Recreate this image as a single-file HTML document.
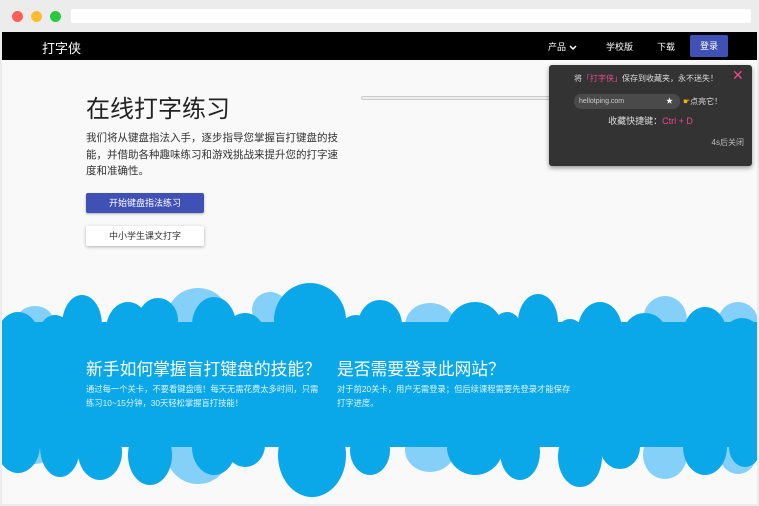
<!DOCTYPE html>
<html><head><meta charset="utf-8"><style>
*{margin:0;padding:0;box-sizing:border-box}
body{width:759px;height:506px;background:#ececec;font-family:"Liberation Sans","Noto Sans CJK SC",sans-serif;position:relative;overflow:hidden}
.dot{position:absolute;top:11px;width:11px;height:11px;border-radius:50%}
.url{position:absolute;left:71px;top:9px;width:680px;height:14px;background:#fff;border-radius:2px}
.page{position:absolute;left:2px;top:32px;width:755px;height:472px;background:#f9f9f9;overflow:hidden}
.nav{position:absolute;left:0;top:0;width:755px;height:28px;background:#000;color:#fff}
.abs{position:absolute}
.btn1{position:absolute;left:84px;top:161px;width:118px;height:20px;background:#3f51b5;color:#fff;font-size:9px;text-align:center;line-height:20px;border-radius:2px;box-shadow:0 1px 2px rgba(0,0,0,.3)}
.btn2{position:absolute;left:84px;top:194px;width:118px;height:20px;background:#fff;color:#333;font-size:9px;text-align:center;line-height:20px;border-radius:2px;box-shadow:0 1px 3px rgba(0,0,0,.3)}
.pop{position:absolute;left:549px;top:65px;width:203px;height:101px;background:#333;border-radius:3px;box-shadow:0 2px 5px rgba(0,0,0,.4);color:#ddd}
</style></head><body>
<div class="dot" style="left:12px;background:#fe5f57"></div>
<div class="dot" style="left:31px;background:#febc2e"></div>
<div class="dot" style="left:50px;background:#28c840"></div>
<div class="url"></div>
<div class="page">
<div class="nav">
<div class="abs" style="left:40px;top:6px;font-size:13px">打字侠</div>
<div class="abs" style="left:546px;top:8px;font-size:9px">产品 <svg width="8" height="6" viewBox="0 0 8 6" style="vertical-align:middle"><path d="M1 1l3 3 3-3" stroke="#fff" stroke-width="1.5" fill="none"/></svg></div>
<div class="abs" style="left:604px;top:8px;font-size:9px">学校版</div>
<div class="abs" style="left:655px;top:8px;font-size:9px">下载</div>
<div class="abs" style="left:688px;top:3px;width:38px;height:22px;background:#3f51b5;border-radius:2px;font-size:9px;text-align:center;line-height:22px">登录</div>
</div>
<div class="abs" style="left:84px;top:57px;font-size:24px;color:#222">在线打字练习</div>
<div class="abs" style="left:84px;top:98px;width:262px;font-size:10.5px;line-height:16.5px;color:#333">我们将从键盘指法入手，逐步指导您掌握盲打键盘的技能，并借助各种趣味练习和游戏挑战来提升您的打字速度和准确性。</div>
<div class="btn1">开始键盘指法练习</div>
<div class="btn2">中小学生课文打字</div>
<div class="abs" style="left:359px;top:64px;width:200px;height:4px;border:1px solid #ccc;border-radius:2px;background:#eee"></div>
<svg class="abs" style="left:-2px;top:213px" width="759" height="259" viewBox="0 245 759 259">
<g fill="#85d0f8">
<ellipse cx="198" cy="320" rx="32" ry="32"/><ellipse cx="430" cy="325" rx="25" ry="22"/><ellipse cx="665" cy="320" rx="22" ry="24"/><ellipse cx="738" cy="322" rx="20" ry="20"/><ellipse cx="35" cy="320" rx="18" ry="14"/><ellipse cx="270" cy="310" rx="18" ry="18"/>
<ellipse cx="198" cy="452" rx="32" ry="32"/><ellipse cx="430" cy="450" rx="25" ry="22"/><ellipse cx="665" cy="455" rx="22" ry="24"/><ellipse cx="738" cy="450" rx="20" ry="24"/><ellipse cx="35" cy="450" rx="18" ry="14"/>
</g>
<g fill="#0aa8e8">
<rect x="2" y="322" width="755" height="125"/>
<ellipse cx="18" cy="340" rx="22" ry="28"/><ellipse cx="55" cy="340" rx="18" ry="25"/><ellipse cx="82" cy="325" rx="20" ry="30"/><ellipse cx="128" cy="330" rx="22" ry="28"/><ellipse cx="158" cy="320" rx="20" ry="22"/><ellipse cx="214" cy="325" rx="22" ry="28"/><ellipse cx="245" cy="335" rx="20" ry="22"/>
<ellipse cx="310" cy="320" rx="36" ry="37"/><ellipse cx="356" cy="335" rx="18" ry="20"/><ellipse cx="380" cy="325" rx="22" ry="25"/><ellipse cx="410" cy="340" rx="15" ry="15"/><ellipse cx="475" cy="330" rx="28" ry="28"/><ellipse cx="507" cy="330" rx="15" ry="18"/><ellipse cx="538" cy="322" rx="20" ry="28"/><ellipse cx="600" cy="330" rx="22" ry="28"/><ellipse cx="570" cy="335" rx="14" ry="16"/><ellipse cx="645" cy="335" rx="22" ry="22"/><ellipse cx="705" cy="335" rx="22" ry="28"/><ellipse cx="742" cy="340" rx="20" ry="22"/>
<ellipse cx="18" cy="445" rx="22" ry="28"/><ellipse cx="60" cy="447" rx="20" ry="30"/><ellipse cx="100" cy="452" rx="22" ry="28"/><ellipse cx="150" cy="455" rx="22" ry="30"/><ellipse cx="214" cy="447" rx="22" ry="28"/><ellipse cx="245" cy="445" rx="20" ry="22"/>
<ellipse cx="312" cy="455" rx="34" ry="42"/><ellipse cx="370" cy="450" rx="20" ry="25"/><ellipse cx="475" cy="447" rx="28" ry="28"/><ellipse cx="520" cy="452" rx="20" ry="28"/><ellipse cx="580" cy="457" rx="22" ry="30"/><ellipse cx="620" cy="447" rx="20" ry="22"/><ellipse cx="705" cy="447" rx="22" ry="28"/><ellipse cx="745" cy="447" rx="16" ry="20"/>
</g>
<text x="86" y="375" fill="#fff" font-size="16.8" font-family="Liberation Sans,Noto Sans CJK SC,sans-serif">新手如何掌握盲打键盘的技能？</text>
<text x="337" y="375" fill="#fff" font-size="16.8" font-family="Liberation Sans,Noto Sans CJK SC,sans-serif">是否需要登录此网站？</text>
<text x="86" y="392" fill="#e0f4ff" font-size="8.3" font-family="Liberation Sans,Noto Sans CJK SC,sans-serif">通过每一个关卡，不要看键盘哦！每天无需花费太多时间，只需</text>
<text x="86" y="406" fill="#e0f4ff" font-size="8.3" font-family="Liberation Sans,Noto Sans CJK SC,sans-serif">练习10~15分钟，30天轻松掌握盲打技能！</text>
<text x="337" y="392" fill="#e0f4ff" font-size="8.3" font-family="Liberation Sans,Noto Sans CJK SC,sans-serif">对于前20关卡，用户无需登录；但后续课程需要先登录才能保存</text>
<text x="337" y="406" fill="#e0f4ff" font-size="8.3" font-family="Liberation Sans,Noto Sans CJK SC,sans-serif">打字进度。</text>
</svg>
</div>
<div class="pop">
<div class="abs" style="left:22px;top:8px;font-size:8px;width:150px;text-align:center">将<span style="color:#e84a8a">「打字侠」</span>保存到收藏夹，永不迷失！</div>
<div class="abs" style="left:183px;top:2px;font-size:14px;color:#e84a8a">✕</div>
<div class="abs" style="left:25px;top:29px;width:106px;height:15px;background:#4a4a4a;border-radius:7px;font-size:7px;line-height:15px;padding-left:5px;color:#ccc">hellotping.com<span style="position:absolute;right:7px;color:#fff">★</span></div>
<div class="abs" style="left:134px;top:31px;font-size:8px"><span style="color:#f4b400">☛</span>点亮它！</div>
<div class="abs" style="left:0;top:49px;width:203px;text-align:center;font-size:9px">收藏快捷键：<span style="color:#e84a8a">Ctrl + D</span></div>
<div class="abs" style="right:8px;top:72px;font-size:8px;color:#bbb">4s后关闭</div>
</div>
</body></html>
